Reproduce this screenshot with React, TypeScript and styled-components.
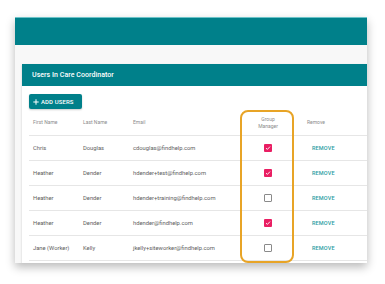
import * as React from 'react';
import styled, { createGlobalStyle } from 'styled-components';

const GlobalStyle = createGlobalStyle`
  body {
    margin: 0;
    background: #ffffff;
    font-family: Roboto, 'Liberation Sans', sans-serif;
  }
`;

const Page = styled.div`
  width: 385px;
  height: 284px;
  padding: 17px 0 0 15px;
  box-sizing: border-box;
`;

const Frame = styled.div`
  width: 352px;
  height: 246px;
  background: #f8f8f8;
  box-shadow: 0 4px 9px rgba(0, 0, 0, 0.28);
  overflow: hidden;
`;

const TopBar = styled.div`
  height: 28px;
  background: #00808a;
  border-top: 1px solid #6cc3c8;
  box-sizing: border-box;
`;

const Body = styled.div`
  padding: 19px 0 0 7px;
`;

const Card = styled.div`
  background: #ffffff;
  box-shadow: 0 1px 2px rgba(0, 0, 0, 0.18);
  height: 200px;
`;

const CardHeader = styled.div`
  height: 22px;
  background: #00808a;
  color: #ffffff;
  display: flex;
  align-items: center;
  padding-left: 10px;
  font-size: 7px;
  font-weight: 500;
  letter-spacing: 0.05px;
`;

const CardContent = styled.div`
  padding: 8px 0 0 7px;
`;

const AddButton = styled.button`
  height: 15px;
  width: 53px;
  display: flex;
  align-items: center;
  gap: 2px;
  padding: 0 0 0 4px;
  border: none;
  border-radius: 2px;
  background: #00808a;
  color: #ffffff;
  font-family: inherit;
  font-size: 6px;
  font-weight: 500;
  letter-spacing: 0.1px;
  box-shadow: 0 1px 2px rgba(0, 0, 0, 0.2);
`;

const Table = styled.div`
  position: relative;
  margin-top: 1px;
`;

const Row = styled.div<{ $head?: boolean }>`
  display: grid;
  grid-template-columns: 50px 50px 111px 56px 1fr;
  align-items: center;
  height: ${p => (p.$head ? '26px' : '25px')};
  border-bottom: 1px solid #e6e6e6;
  box-sizing: border-box;
  font-size: ${p => (p.$head ? '5px' : '5.8px')};
  color: ${p => (p.$head ? '#8c8c8c' : '#606060')};
`;

const Cell = styled.div<{ $center?: boolean; $pad?: number }>`
  padding-left: ${p => p.$pad ?? 4}px;
  text-align: ${p => (p.$center ? 'center' : 'left')};
  display: flex;
  justify-content: ${p => (p.$center ? 'center' : 'flex-start')};
  white-space: nowrap;
  line-height: 7px;
`;

const Box = styled.span<{ $checked: boolean }>`
  width: 8px;
  height: 8px;
  box-sizing: border-box;
  border-radius: 1px;
  display: flex;
  align-items: center;
  justify-content: center;
  background: ${p => (p.$checked ? '#e91e63' : '#ffffff')};
  border: ${p => (p.$checked ? 'none' : '1px solid #8a8a8a')};
  margin-right: 4px;
`;

const RemoveButton = styled.span`
  padding-left: 5px;
  color: #2a9da3;
  font-size: 5.5px;
  font-weight: 500;
  letter-spacing: 0.15px;
`;

const Highlight = styled.div`
  position: absolute;
  left: 211px;
  top: 0;
  width: 54px;
  height: 153px;
  border: 2px solid #e8a426;
  border-radius: 8px;
  box-sizing: border-box;
  pointer-events: none;
`;

const Check = () => (
  <svg width="6" height="6" viewBox="0 0 6 6">
    <path d="M1 3.1 L2.4 4.4 L5 1.6" fill="none" stroke="#ffffff" strokeWidth="0.9" />
  </svg>
);

const Plus = () => (
  <svg width="6" height="6" viewBox="0 0 6 6">
    <path d="M3 0.3 V5.7 M0.3 3 H5.7" stroke="#ffffff" strokeWidth="1" />
  </svg>
);

const users = [
  { first: 'Chris', last: 'Douglas', email: 'cdouglas@findhelp.com', manager: true },
  { first: 'Heather', last: 'Dender', email: 'hdender+test@findhelp.com', manager: true },
  { first: 'Heather', last: 'Dender', email: 'hdender+training@findhelp.com', manager: false },
  { first: 'Heather', last: 'Dender', email: 'hdender@findhelp.com', manager: true },
  { first: 'Jane (Worker)', last: 'Kelly', email: 'jkelly+siteworker@findhelp.com', manager: false }
];

const App = () => {
  return (
    <Page>
      <GlobalStyle />
      <Frame>
        <TopBar />
        <Body>
          <Card>
            <CardHeader>Users In Care Coordinator</CardHeader>
            <CardContent>
              <AddButton>
                <Plus />
                ADD USERS
              </AddButton>
              <Table>
                <Row $head>
                  <Cell>First Name</Cell>
                  <Cell>Last Name</Cell>
                  <Cell>Email</Cell>
                  <Cell $center $pad={0}>
                    Group
                    <br />
                    Manager
                  </Cell>
                  <Cell $pad={11}>Remove</Cell>
                </Row>
                {users.map((u, i) => (
                  <Row key={i}>
                    <Cell>{u.first}</Cell>
                    <Cell>{u.last}</Cell>
                    <Cell>{u.email}</Cell>
                    <Cell $center $pad={4}>
                      <Box $checked={u.manager}>{u.manager && <Check />}</Box>
                    </Cell>
                    <Cell $pad={11}>
                      <RemoveButton>REMOVE</RemoveButton>
                    </Cell>
                  </Row>
                ))}
                <Highlight />
              </Table>
            </CardContent>
          </Card>
        </Body>
      </Frame>
    </Page>
  );
};

export default App;
